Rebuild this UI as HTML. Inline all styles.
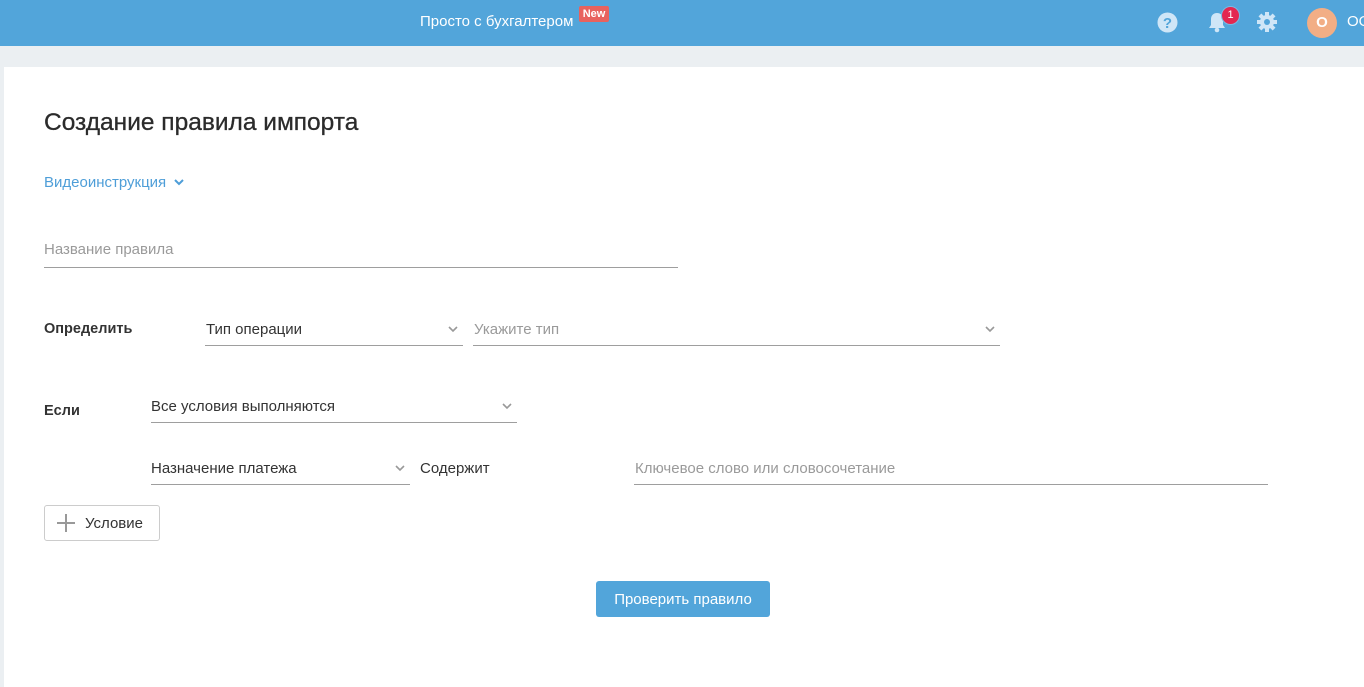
<!DOCTYPE html>
<html><head><meta charset="utf-8"><style>
*{margin:0;padding:0;box-sizing:border-box}
body{width:1364px;height:677px;overflow:hidden;background:#ebeff2;font-family:"Liberation Sans",sans-serif;color:#333;position:relative}
.hdr{position:absolute;left:0;top:0;width:1364px;height:46px;background:#52a5da}
.abs{position:absolute;white-space:nowrap}
.card{position:absolute;left:4px;top:67px;width:1360px;height:620px;background:#fff}
.line{position:absolute;height:1px;background:#9e9e9e}
.chev{position:absolute;width:12px;height:8px}
.lbl{font-size:14.5px;font-weight:bold;color:#333}
.val{font-size:15px;color:#333}
.ph{font-size:15px;color:#9a9a9a}
</style></head><body>
<div class="hdr"></div>
<div class="abs" style="left:420px;top:13px;font-size:15px;color:#fff">Просто с бухгалтером</div>
<div class="abs" style="left:579px;top:6px;width:30px;height:16px;background:#e8625e;border-radius:2px;color:#fff;font-size:11px;font-weight:bold;text-align:center;line-height:16px">New</div>
<svg class="abs" style="left:1157px;top:12px" width="21" height="21"><circle cx="10.5" cy="10.5" r="10" fill="#cfe6f7"/><text x="10.5" y="16" text-anchor="middle" font-family="Liberation Sans" font-weight="bold" font-size="15" fill="#52a5da">?</text></svg>
<svg class="abs" style="left:1207px;top:11px" width="20" height="22"><path d="M10 2c-4 0-6 3-6 6v6l-2 3h16l-2-3V8c0-3-2-6-6-6z" fill="#cfe6f7"/><circle cx="10" cy="19" r="2.3" fill="#cfe6f7"/></svg>
<div class="abs" style="left:1221px;top:6px;width:19px;height:19px;border-radius:50%;background:#e32750;border:1.5px solid #7cb9e2;color:#fff;font-size:11px;text-align:center;line-height:16px">1</div>
<svg class="abs" style="left:1256px;top:11px" width="22" height="22" viewBox="0 0 22 22"><g fill="#cfe6f7"><circle cx="11" cy="11" r="7"/><g id="t"><rect x="9" y="1" width="4" height="5"/><rect x="9" y="16" width="4" height="5"/></g><use href="#t" transform="rotate(45 11 11)"/><use href="#t" transform="rotate(90 11 11)"/><use href="#t" transform="rotate(135 11 11)"/></g><circle cx="11" cy="11" r="3" fill="#52a5da"/></svg>
<div class="abs" style="left:1307px;top:8px;width:30px;height:30px;border-radius:50%;background:#f2ae85;color:#fff;font-size:15px;font-weight:bold;text-align:center;line-height:30px">О</div>
<div class="abs" style="left:1347px;top:13px;font-size:15px;color:#fff">ОО</div>

<div class="card"></div>
<div class="abs" style="left:44px;top:109px;font-size:24.5px;color:#2b2b2b;-webkit-text-stroke:0.3px #2b2b2b">Создание правила импорта</div>
<div class="abs" style="left:44px;top:174px;font-size:15px;color:#4e9ed8">Видеоинструкция</div>
<svg class="chev" style="left:173px;top:178px" viewBox="0 0 12 8"><path d="M2 2l4 4 4-4" stroke="#4e9ed8" stroke-width="2" fill="none"/></svg>

<div class="abs ph" style="left:44px;top:241px">Название правила</div>
<div class="line" style="left:44px;top:267px;width:634px"></div>

<div class="abs lbl" style="left:44px;top:321px">Определить</div>
<div class="abs val" style="left:206px;top:321px">Тип операции</div>
<svg class="chev" style="left:447px;top:325px" viewBox="0 0 12 8"><path d="M2 2l4 4 4-4" stroke="#999" stroke-width="1.6" fill="none"/></svg>
<div class="line" style="left:205px;top:345px;width:258px"></div>
<div class="abs ph" style="left:474px;top:321px">Укажите тип</div>
<svg class="chev" style="left:984px;top:325px" viewBox="0 0 12 8"><path d="M2 2l4 4 4-4" stroke="#999" stroke-width="1.6" fill="none"/></svg>
<div class="line" style="left:473px;top:345px;width:527px"></div>

<div class="abs lbl" style="left:44px;top:403px">Если</div>
<div class="abs val" style="left:151px;top:398px">Все условия выполняются</div>
<svg class="chev" style="left:501px;top:402px" viewBox="0 0 12 8"><path d="M2 2l4 4 4-4" stroke="#999" stroke-width="1.6" fill="none"/></svg>
<div class="line" style="left:151px;top:422px;width:366px"></div>

<div class="abs val" style="left:151px;top:460px">Назначение платежа</div>
<svg class="chev" style="left:394px;top:464px" viewBox="0 0 12 8"><path d="M2 2l4 4 4-4" stroke="#999" stroke-width="1.6" fill="none"/></svg>
<div class="line" style="left:151px;top:484px;width:259px"></div>
<div class="abs val" style="left:420px;top:460px">Содержит</div>
<div class="abs ph" style="left:635px;top:460px">Ключевое слово или словосочетание</div>
<div class="line" style="left:634px;top:484px;width:634px"></div>

<div class="abs" style="left:44px;top:505px;width:116px;height:36px;border:1px solid #ccc;border-radius:3px"></div>
<svg class="abs" style="left:56px;top:513px" width="20" height="20"><path d="M10 1v18M1 10h18" stroke="#999" stroke-width="2"/></svg>
<div class="abs val" style="left:85px;top:515px">Условие</div>

<div class="abs" style="left:596px;top:581px;width:174px;height:36px;background:#52a5da;border-radius:3px;color:#fff;font-size:15px;text-align:center;line-height:37px">Проверить правило</div>
</body></html>
